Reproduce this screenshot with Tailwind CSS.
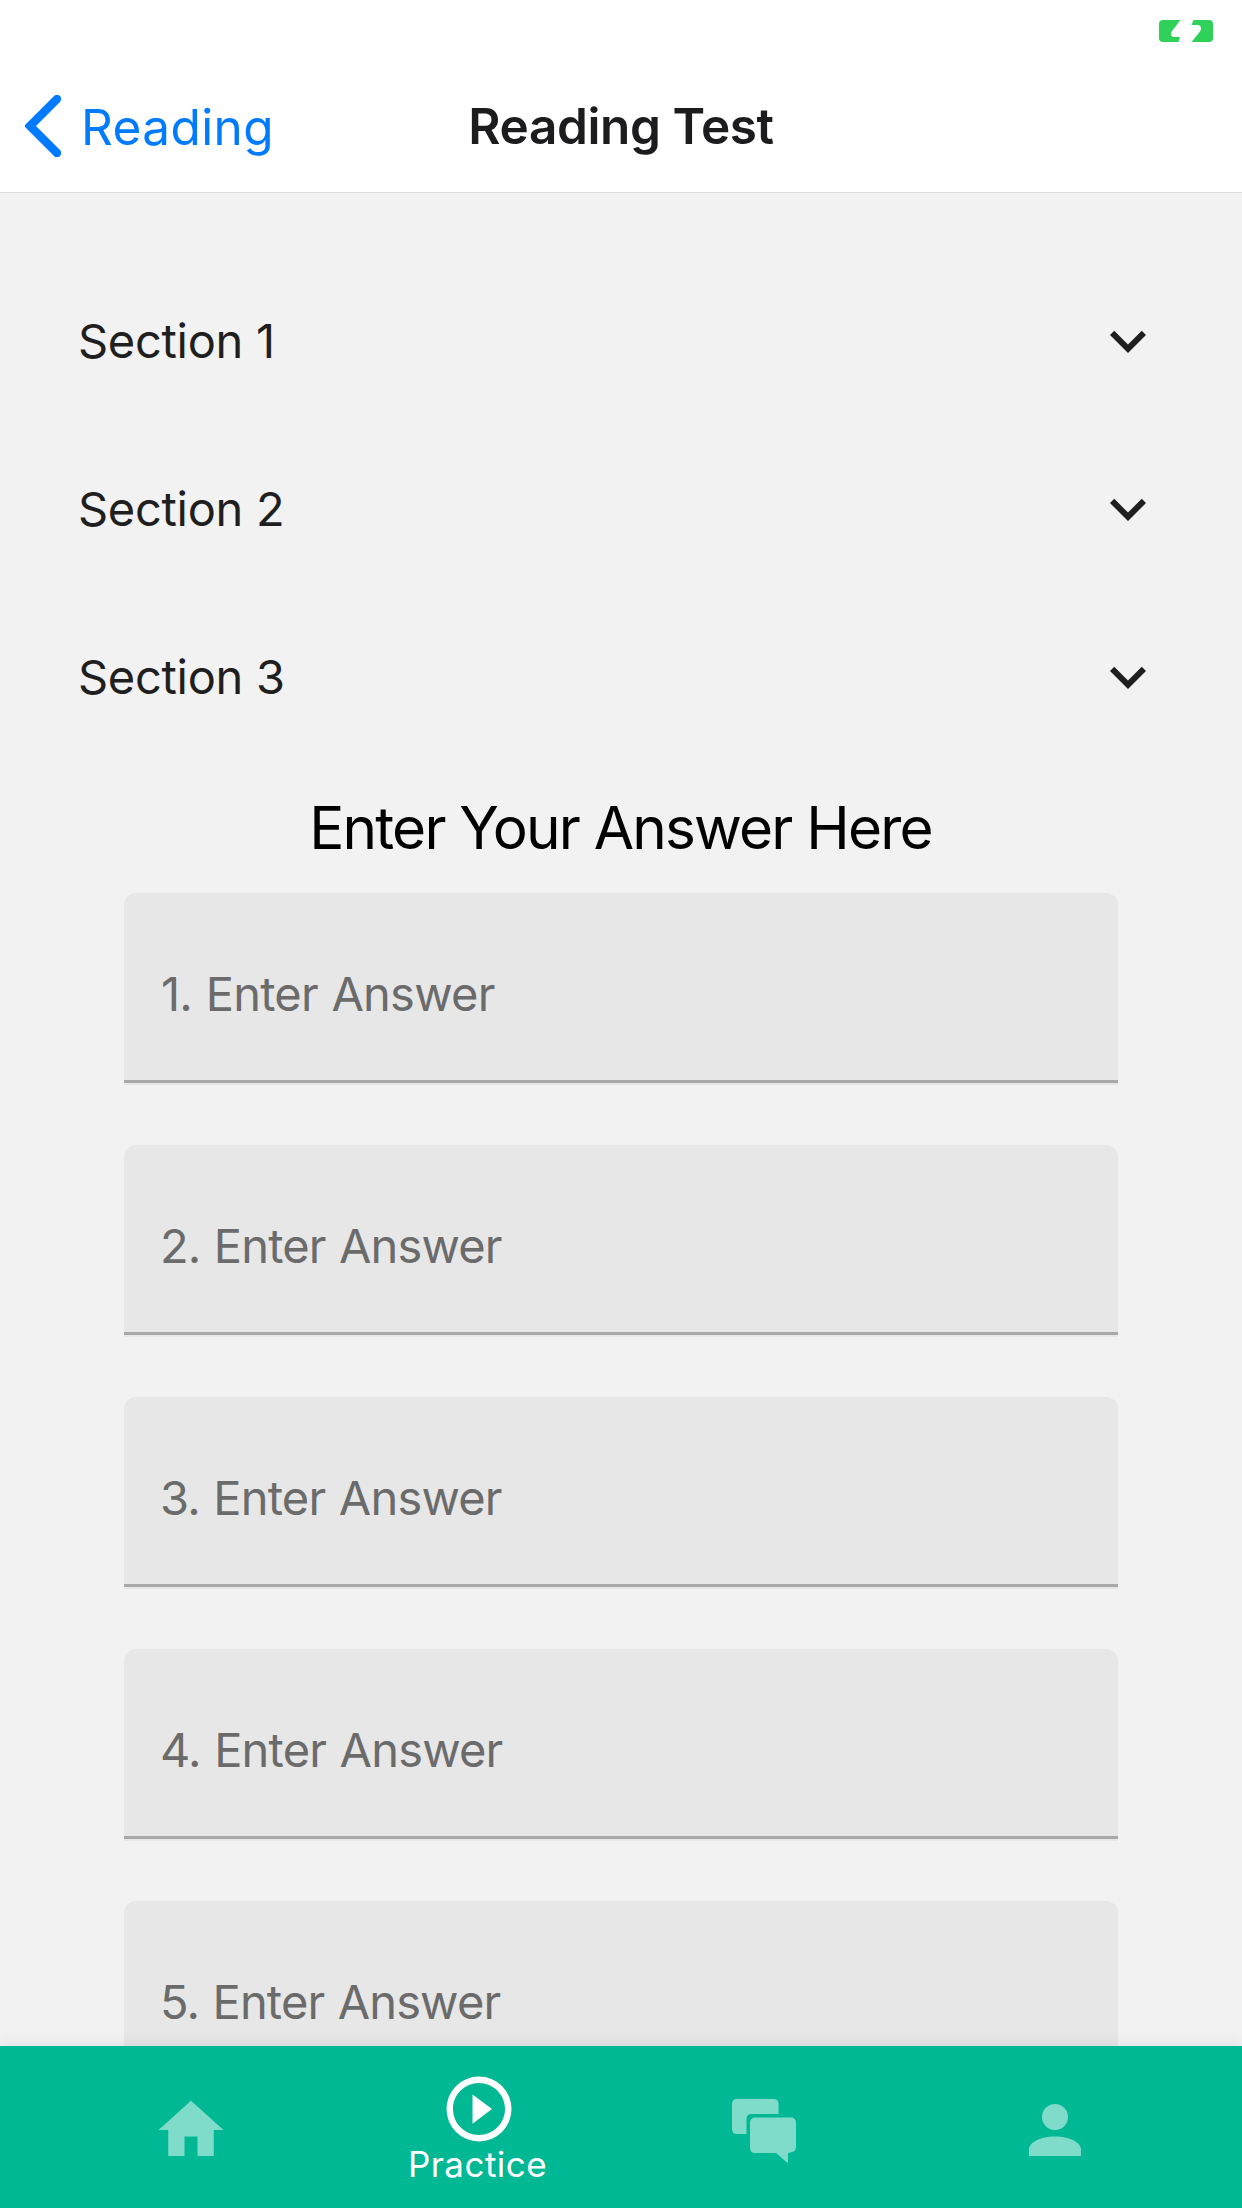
<!DOCTYPE html>
<html lang="en">
<head>
<meta charset="utf-8">
<title>Reading Test</title>
<script src="https://cdn.jsdelivr.net/npm/@tailwindcss/browser@4"></script>
</head>
<body class="bg-[#f2f2f2] font-['Inter',sans-serif] antialiased">
<div class="relative flex h-[2208px] w-[1242px] flex-col overflow-hidden">
  <header class="h-[193px] shrink-0 border-b border-[#dedede] bg-white">
    <div class="flex h-[60px] justify-end pt-5 pr-[29px]">
      <svg class="h-[22px] w-[54px]" viewBox="0 0 54 22" fill="#30d158">
        <path d="M4 0H21.5L13 11C11 13.5 12 17 15.5 17H21L19.500 22H4Q0 22 0 18V4Q0 0 4 0Z"/>
        <path d="M34.500 0H50Q54 0 54 4V18Q54 22 50 22H32.500L41 11.500C43 8.500 42 5 38.500 5H32.500Z"/>
      </svg>
    </div>
    <div class="grid h-[132px] grid-cols-[460px_1fr_460px]">
      <a class="flex items-start pl-[25px] text-[#007aff]">
        <svg class="mt-[35px] h-[62px] w-9" viewBox="0 0 36 62" fill="none" stroke="currentColor" stroke-width="8.4" stroke-linecap="round"><path d="M32 4L5 31L32 58"/></svg>
        <span class="mt-[37px] ml-5 text-[49.5px] leading-[60px] tracking-[0.4px]">Reading</span>
      </a>
      <h1 class="mt-9 text-center text-[49.5px] leading-[60px] font-semibold tracking-[-0.4px] whitespace-nowrap text-[#1c1c1e]">Reading Test</h1>
    </div>
  </header>

  <main class="flex-1 pt-[63px]">
    <div class="flex h-[168px] items-start justify-between pr-[78px] pl-[78px] text-[#1f1f1f]">
      <span class="mt-14 text-[47px] leading-[57px] tracking-[-0.3px]">Section 1</span>
      <svg class="mt-[49px] size-[72px]" viewBox="0 0 24 24" fill="currentColor"><path d="M7.410 8.580L12 13.170L16.590 8.580L18 10L12 16L6 10Z"/></svg>
    </div>
    <div class="flex h-[168px] items-start justify-between pr-[78px] pl-[78px] text-[#1f1f1f]">
      <span class="mt-14 text-[47px] leading-[57px] tracking-[-0.3px]">Section 2</span>
      <svg class="mt-[49px] size-[72px]" viewBox="0 0 24 24" fill="currentColor"><path d="M7.410 8.580L12 13.170L16.590 8.580L18 10L12 16L6 10Z"/></svg>
    </div>
    <div class="flex h-[168px] items-start justify-between pr-[78px] pl-[78px] text-[#1f1f1f]">
      <span class="mt-14 text-[47px] leading-[57px] tracking-[-0.3px]">Section 3</span>
      <svg class="mt-[49px] size-[72px]" viewBox="0 0 24 24" fill="currentColor"><path d="M7.410 8.580L12 13.170L16.590 8.580L18 10L12 16L6 10Z"/></svg>
    </div>

    <h2 class="mt-8 mr-px text-center text-[58.5px] leading-[71px] tracking-[-1.8px] whitespace-nowrap text-black">Enter Your Answer Here</h2>

    <div class="mt-[30px] flex flex-col gap-[60px] px-[124px] text-[47px] leading-[57px] text-[#6b6b6b]">
      <div class="flex h-48 flex-col rounded-t-[12px] bg-[#e7e7e7] pt-[72px]"><span class="pl-[37px] tracking-[-0.75px] [word-spacing:1px]">1. Enter Answer</span><div class="mt-auto mb-0.5 h-[3px] bg-[#a9a9a9]"></div></div>
      <div class="flex h-48 flex-col rounded-t-[12px] bg-[#e7e7e7] pt-[72px]"><span class="pl-[36px] tracking-[-0.85px] [word-spacing:1px]">2. Enter Answer</span><div class="mt-auto mb-0.5 h-[3px] bg-[#a9a9a9]"></div></div>
      <div class="flex h-48 flex-col rounded-t-[12px] bg-[#e7e7e7] pt-[72px]"><span class="pl-[36px] tracking-[-0.8px] [word-spacing:1px]">3. Enter Answer</span><div class="mt-auto mb-0.5 h-[3px] bg-[#a9a9a9]"></div></div>
      <div class="flex h-48 flex-col rounded-t-[12px] bg-[#e7e7e7] pt-[72px]"><span class="pl-[36px] tracking-[-0.8px] [word-spacing:1px]">4. Enter Answer</span><div class="mt-auto mb-0.5 h-[3px] bg-[#a9a9a9]"></div></div>
      <div class="flex h-48 flex-col rounded-t-[12px] bg-[#e7e7e7] pt-[72px]"><span class="pl-[36px] tracking-[-0.85px] [word-spacing:1px]">5. Enter Answer</span><div class="mt-auto mb-0.5 h-[3px] bg-[#a9a9a9]"></div></div>
    </div>
  </main>

  <nav class="absolute inset-x-0 bottom-0 grid h-[162px] grid-cols-4 bg-[#00b894] pr-[43px] pl-[47px] text-white shadow-[0_-2px_14px_rgba(0,0,0,0.08)]">
    <a class="flex justify-center pt-[45px] text-white/50">
      <svg class="size-[78px]" viewBox="0 0 24 24" fill="currentColor"><path d="M10 20V14H14V20H19V12H22L12 3L2 12H5V20H10Z"/></svg>
    </a>
    <a class="flex flex-col items-center pt-[24px]">
      <svg class="size-[78px] shrink-0" viewBox="0 0 24 24" fill="currentColor"><path d="M12 20C7.590 20 4 16.410 4 12S7.590 4 12 4S20 7.590 20 12S16.410 20 12 20M12 2A10 10 0 0 0 2 12A10 10 0 0 0 12 22A10 10 0 0 0 22 12A10 10 0 0 0 12 2M10 16.500L16 12L10 7.500V16.500Z"/></svg>
      <span class="-mt-[5px] mr-[3px] text-[35px] leading-[42px] tracking-[0.45px]">Practice</span>
    </a>
    <a class="flex justify-center pt-[53px] pr-[6px] text-white/50">
      <svg class="h-16 w-16" viewBox="0 0 64 64" fill="currentColor">
        <path d="M5 0H41.500Q46.500 0 46.500 5V15H19.500Q14.500 15 14.500 20V35H5Q0 35 0 30V5Q0 0 5 0Z"/>
        <path d="M23.500 18.500H58.500Q64 18.500 64 24V48.500Q64 53 56 54V63.500H55L44 54H23.500Q18 54 18 48.500V24Q18 18.500 23.500 18.500Z"/>
      </svg>
    </a>
    <a class="flex justify-center pt-[45px] text-white/50">
      <svg class="size-[78px]" viewBox="0 0 24 24" fill="currentColor"><path d="M12 4A4 4 0 0 1 16 8A4 4 0 0 1 12 12A4 4 0 0 1 8 8A4 4 0 0 1 12 4M12 14C16.420 14 20 15.790 20 18V20H4V18C4 15.790 7.580 14 12 14Z"/></svg>
    </a>
  </nav>
</div>
</body>
</html>
